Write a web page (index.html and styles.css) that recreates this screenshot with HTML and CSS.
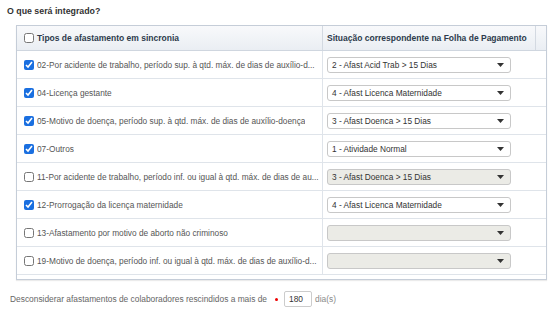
FILE: index.html
```html
<!DOCTYPE html>
<html lang="pt-BR">
<head>
<meta charset="utf-8">
<title>Integração</title>
<link rel="stylesheet" href="styles.css">
</head>
<body>
<h2 class="title">O que será integrado?</h2>
<div class="table">
  <div class="thead">
    <div class="th th-type"><input type="checkbox" class="cb"><span>Tipos de afastamento em sincronia</span></div>
    <div class="th th-sit">Situação correspondente na Folha de Pagamento</div>
    <div class="th th-gutter"></div>
  </div>
  <div class="tbody">
    <div class="tr">
      <div class="td td-type"><input type="checkbox" class="cb" checked><span class="label">02-Por acidente de trabalho, período sup. à qtd. máx. de dias de auxílio-d...</span></div>
      <div class="td td-sit"><div class="select"><span>2 - Afast Acid Trab &gt; 15 Dias</span><svg class="arrow" width="7" height="4" viewBox="0 0 7 4"><path d="M0 0h7L3.5 4z"/></svg></div></div>
    </div>
    <div class="tr">
      <div class="td td-type"><input type="checkbox" class="cb" checked><span class="label">04-Licença gestante</span></div>
      <div class="td td-sit"><div class="select"><span>4 - Afast Licenca Maternidade</span><svg class="arrow" width="7" height="4" viewBox="0 0 7 4"><path d="M0 0h7L3.5 4z"/></svg></div></div>
    </div>
    <div class="tr">
      <div class="td td-type"><input type="checkbox" class="cb" checked><span class="label">05-Motivo de doença, período sup. à qtd. máx. de dias de auxílio-doença</span></div>
      <div class="td td-sit"><div class="select"><span>3 - Afast Doenca &gt; 15 Dias</span><svg class="arrow" width="7" height="4" viewBox="0 0 7 4"><path d="M0 0h7L3.5 4z"/></svg></div></div>
    </div>
    <div class="tr">
      <div class="td td-type"><input type="checkbox" class="cb" checked><span class="label">07-Outros</span></div>
      <div class="td td-sit"><div class="select"><span>1 - Atividade Normal</span><svg class="arrow" width="7" height="4" viewBox="0 0 7 4"><path d="M0 0h7L3.5 4z"/></svg></div></div>
    </div>
    <div class="tr">
      <div class="td td-type"><input type="checkbox" class="cb"><span class="label">11-Por acidente de trabalho, período inf. ou igual à qtd. máx. de dias de au...</span></div>
      <div class="td td-sit"><div class="select disabled"><span>3 - Afast Doenca &gt; 15 Dias</span><svg class="arrow" width="7" height="4" viewBox="0 0 7 4"><path d="M0 0h7L3.5 4z"/></svg></div></div>
    </div>
    <div class="tr">
      <div class="td td-type"><input type="checkbox" class="cb" checked><span class="label">12-Prorrogação da licença maternidade</span></div>
      <div class="td td-sit"><div class="select"><span>4 - Afast Licenca Maternidade</span><svg class="arrow" width="7" height="4" viewBox="0 0 7 4"><path d="M0 0h7L3.5 4z"/></svg></div></div>
    </div>
    <div class="tr">
      <div class="td td-type"><input type="checkbox" class="cb"><span class="label">13-Afastamento por motivo de aborto não criminoso</span></div>
      <div class="td td-sit"><div class="select disabled"><span></span><svg class="arrow" width="7" height="4" viewBox="0 0 7 4"><path d="M0 0h7L3.5 4z"/></svg></div></div>
    </div>
    <div class="tr">
      <div class="td td-type"><input type="checkbox" class="cb"><span class="label">19-Motivo de doença, período inf. ou igual à qtd. máx. de dias de auxílio-d...</span></div>
      <div class="td td-sit"><div class="select disabled"><span></span><svg class="arrow" width="7" height="4" viewBox="0 0 7 4"><path d="M0 0h7L3.5 4z"/></svg></div></div>
    </div>
  </div>
</div>
<div class="footer">
  <span>Desconsiderar afastamentos de colaboradores rescindidos a mais de</span>
  <span class="req"></span>
  <span class="num">180</span>
  <span class="unit">dia(s)</span>
</div>
</body>
</html>
```

FILE: styles.css
```css
body {
  margin: 0;
  background: #fff;
  font-family: "Liberation Sans", Arial, sans-serif;
  color: #555;
}

.title {
  margin: 5px 0 0 7px;
  font-size: 8.8px;
  line-height: 12px;
  font-weight: bold;
  color: #333;
}

.table {
  margin: 8px 0 0 16px;
  width: 531px;
  box-sizing: border-box;
  border: 1px solid #c5cdd8;
  box-shadow: 0 1px 1px rgba(0, 0, 0, 0.08);
}

.thead {
  display: grid;
  grid-template-columns: 305px 1fr 11px;
  height: 24px;
  border-bottom: 1px solid #cfd6df;
  background: linear-gradient(#f8f9fb, #eaeef3);
}

.th {
  display: flex;
  align-items: center;
  font-weight: bold;
  font-size: 8.5px;
  color: #2d3b4c;
  white-space: nowrap;
  overflow: hidden;
}

.th + .th {
  border-left: 1px solid #d3d9e1;
}

.th-type {
  padding-left: 7px;
}

.th-sit {
  padding-left: 4px;
}

.tbody {
  padding-bottom: 4px;
}

.tr {
  display: grid;
  grid-template-columns: 305px 1fr;
  height: 27px;
  border-bottom: 1px solid #dfe4ea;
}

.td {
  display: flex;
  align-items: center;
  min-width: 0;
}

.td-type {
  padding-left: 7px;
}

.td-sit {
  border-left: 1px solid #dfe4ea;
  padding-left: 4px;
}

.cb {
  width: 10px;
  height: 10px;
  margin: 0 3px 0 0;
  flex: none;
  accent-color: #1a6fe0;
}

.label {
  white-space: nowrap;
  overflow: hidden;
  font-size: 8.3px;
  color: #555;
}

.select {
  width: 184px;
  height: 16px;
  box-sizing: border-box;
  border: 1px solid #c8c8c8;
  border-radius: 3px;
  background: #fff;
  display: flex;
  align-items: center;
  justify-content: space-between;
  padding: 0 6px 0 4px;
  font-size: 8.3px;
  color: #333;
  white-space: nowrap;
}

.select.disabled {
  background: #ebebe6;
}

.arrow {
  fill: #333;
  flex: none;
}

.footer {
  display: flex;
  align-items: center;
  margin: 11px 0 0 10px;
  font-size: 8.4px;
  color: #666;
}

.req {
  width: 3px;
  height: 3px;
  border-radius: 50%;
  background: #e00;
  margin: 0 6px 0 8px;
}

.num {
  width: 28px;
  height: 16px;
  box-sizing: border-box;
  border: 1px solid #ccc;
  border-radius: 2px;
  padding-left: 4px;
  display: flex;
  align-items: center;
  color: #333;
}

.unit {
  margin-left: 3px;
  color: #888;
}
```
